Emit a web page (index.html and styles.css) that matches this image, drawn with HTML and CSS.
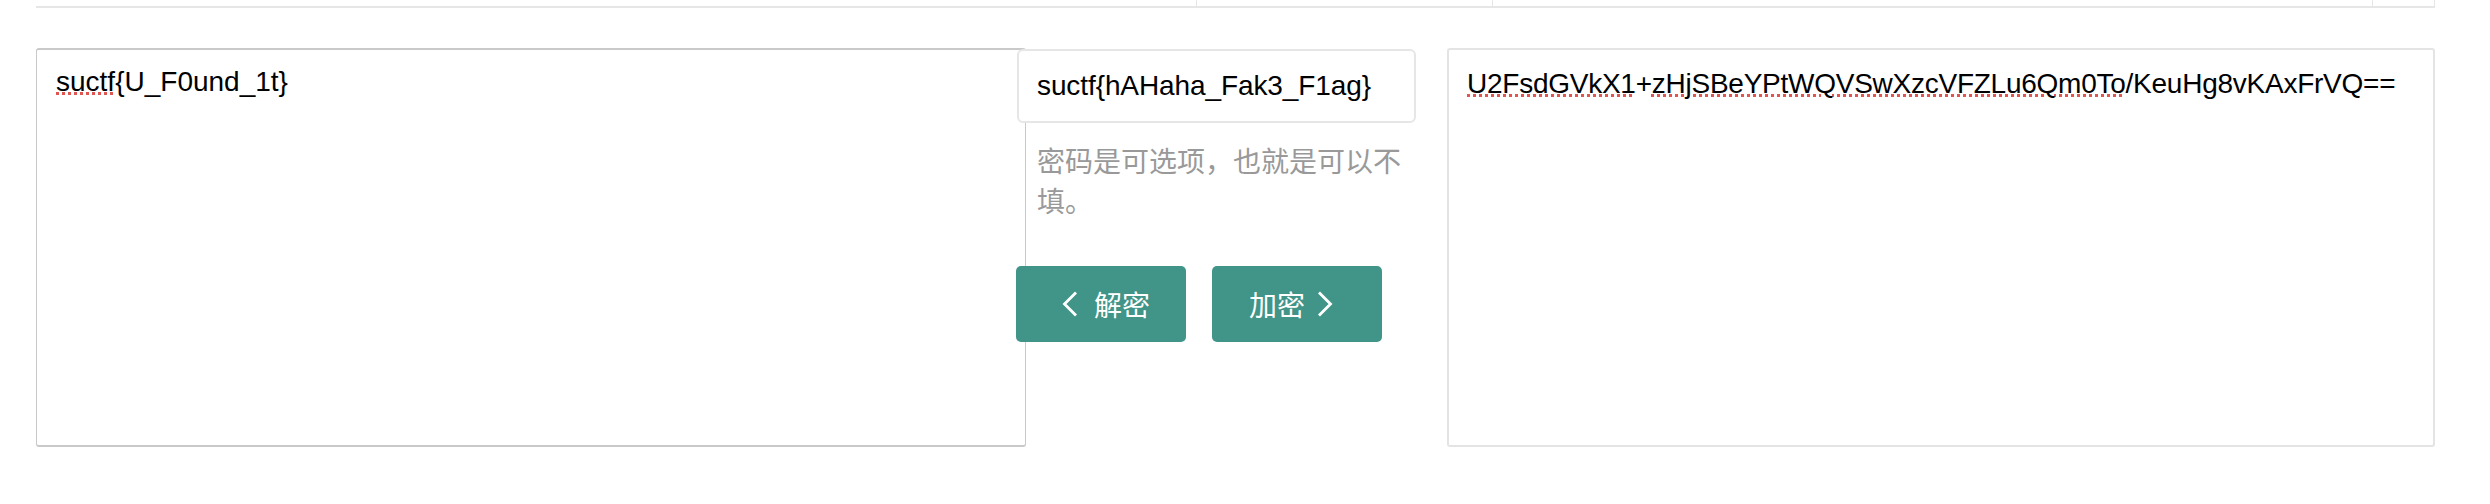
FILE: index.html
```html
<!DOCTYPE html>
<html lang="zh">
<head>
<meta charset="utf-8">
<title>AES</title>
<link rel="stylesheet" href="styles.css">
</head>
<body>
<div class="topstrip">
  <div class="cell c1"></div>
  <div class="cell c2"></div>
  <div class="cell c3"></div>
  <div class="cell c4"></div>
</div>
<div class="main">
  <div class="box box-left"><span class="spell">suctf</span>{U_F0und_1t}</div>
  <div class="middle">
    <div class="pwd">suctf{hAHaha_Fak3_F1ag}</div>
    <p class="help">密码是可选项，也就是可以不填。</p>
    <div class="btns">
      <button class="btn btn-dec"><svg class="chev" viewBox="0 0 16 26" width="16" height="26"><path d="M14 1.5 L2.5 13 L14 24.5" fill="none" stroke="#fff" stroke-width="2.8"/></svg><span>解密</span></button>
      <button class="btn btn-enc"><span>加密</span><svg class="chev" viewBox="0 0 16 26" width="16" height="26"><path d="M2 1.5 L13.5 13 L2 24.5" fill="none" stroke="#fff" stroke-width="2.8"/></svg></button>
    </div>
  </div>
  <div class="box box-right"><span class="spell">U2FsdGVkX1</span>+<span class="spell">zHjSBeYPtWQVSwXzcVFZLu6Qm0To</span>/KeuHg8vKAxFrVQ==</div>
</div>
</body>
</html>
```
FILE: styles.css
```css
html, body {
  margin: 0;
  padding: 0;
  background: #ffffff;
}
body {
  font-family: "Liberation Sans", Arial, "Noto Sans CJK SC", sans-serif;
  color: #000;
}
.topstrip {
  display: flex;
  margin-left: 36px;
  width: 2399px;
  height: 6px;
  border-bottom: 2px solid #e6e6e6;
}
.cell {
  height: 6px;
  border-right: 1px solid #e6e6e6;
  box-sizing: border-box;
}
.c1 { width: 1161px; }
.c2 { width: 296px; }
.c3 { width: 880px; }
.c4 { width: 62px; }

.main {
  display: flex;
  align-items: flex-start;
  margin-top: 40px;
  padding-left: 36px;
}
.box {
  box-sizing: border-box;
  height: 399px;
  font-size: 28px;
  line-height: 40px;
  border-radius: 3px;
  white-space: nowrap;
}
.box-left {
  width: 990px;
  padding: 12px 19px;
  border: 2px solid #c9c9c9;
  border-left-width: 1.5px;
  border-right-width: 1.5px;
}
.box-right {
  width: 988px;
  margin-left: 31px;
  padding: 14px 18px;
  border: 2px solid #e4e4e4;
  letter-spacing: -0.25px;
}
.spell {
  text-decoration: underline dotted #e0554f;
  text-decoration-thickness: 3px;
  text-underline-offset: 1px;
}
.middle {
  width: 399px;
  margin-left: -9px;
  margin-top: 1px;
}
.pwd {
  box-sizing: border-box;
  height: 74px;
  background: #fff;
  border: 2px solid #e6e6e6;
  border-radius: 6px;
  font-size: 28px;
  line-height: 70px;
  padding-left: 18px;
  letter-spacing: -0.1px;
  white-space: nowrap;
}
.help {
  margin: 17px 0 0 0;
  padding-left: 20px;
  width: 375px;
  font-size: 28px;
  line-height: 40px;
  color: #999999;
  font-family: "Noto Sans CJK SC", "Liberation Sans", sans-serif;
}
.btns {
  display: flex;
  gap: 26px;
  margin-top: 46px;
  margin-left: -1px;
}
.btn {
  box-sizing: border-box;
  width: 170px;
  height: 76px;
  border: none;
  border-radius: 5px;
  background: #409488;
  color: #fff;
  font-size: 28px;
  font-family: "Noto Sans CJK SC", "Liberation Sans", sans-serif;
  display: flex;
  align-items: center;
  justify-content: flex-start;
  padding: 0;
}
.btn-dec {
  padding-left: 46px;
  gap: 16px;
}
.btn-enc {
  padding-left: 37px;
  gap: 12px;
}
.btn span { line-height: 1; }
.chev { display: block; }
```
